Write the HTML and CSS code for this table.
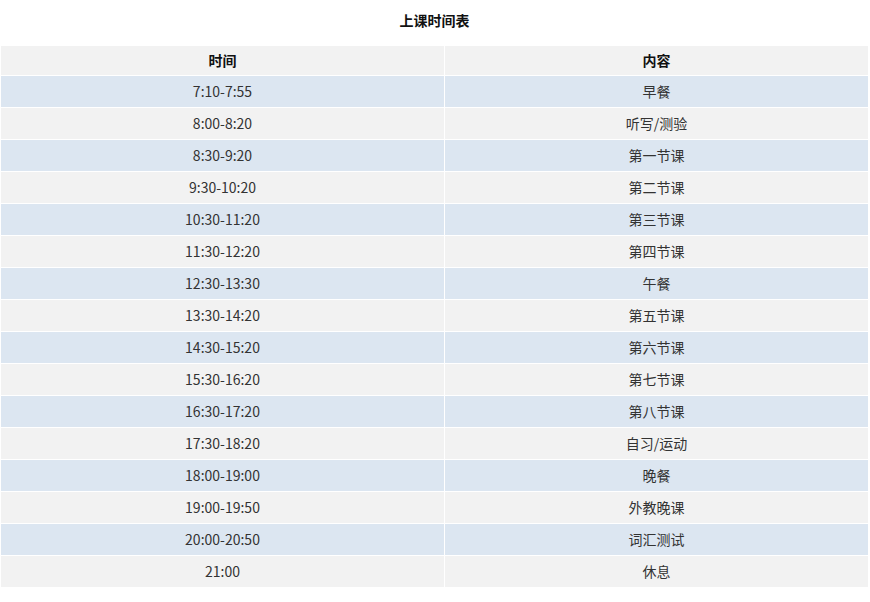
FILE: index.html
```html
<!DOCTYPE html>
<html lang="zh">
<head>
<meta charset="utf-8">
<link rel="stylesheet" href="styles.css">
</head>
<body>
<div class="page">
  <h1 class="title">上课时间表</h1>
  <div class="schedule">
    <div class="cell head">时间</div><div class="cell head">内容</div>
    <div class="cell blue">7:10-7:55</div><div class="cell blue">早餐</div>
    <div class="cell gray">8:00-8:20</div><div class="cell gray">听写/测验</div>
    <div class="cell blue">8:30-9:20</div><div class="cell blue">第一节课</div>
    <div class="cell gray">9:30-10:20</div><div class="cell gray">第二节课</div>
    <div class="cell blue">10:30-11:20</div><div class="cell blue">第三节课</div>
    <div class="cell gray">11:30-12:20</div><div class="cell gray">第四节课</div>
    <div class="cell blue">12:30-13:30</div><div class="cell blue">午餐</div>
    <div class="cell gray">13:30-14:20</div><div class="cell gray">第五节课</div>
    <div class="cell blue">14:30-15:20</div><div class="cell blue">第六节课</div>
    <div class="cell gray">15:30-16:20</div><div class="cell gray">第七节课</div>
    <div class="cell blue">16:30-17:20</div><div class="cell blue">第八节课</div>
    <div class="cell gray">17:30-18:20</div><div class="cell gray">自习/运动</div>
    <div class="cell blue">18:00-19:00</div><div class="cell blue">晚餐</div>
    <div class="cell gray">19:00-19:50</div><div class="cell gray">外教晚课</div>
    <div class="cell blue">20:00-20:50</div><div class="cell blue">词汇测试</div>
    <div class="cell gray">21:00</div><div class="cell gray">休息</div>
  </div>
</div>
</body>
</html>
```

FILE: styles.css
```css
html, body {
  margin: 0;
  padding: 0;
  background: #ffffff;
}
.page {
  padding: 0 2px 0 1px;
  font-family: "Noto Sans CJK SC", "Noto Sans", sans-serif;
  color: #333333;
}
.title {
  margin: 0;
  height: 46px;
  line-height: 40px;
  font-size: 14px;
  font-weight: bold;
  text-align: center;
  color: #111111;
}
.schedule {
  display: grid;
  grid-template-columns: 443px 423px;
  grid-auto-rows: 31px;
  grid-template-rows: 29px;
  gap: 1px;
  background: #ffffff;
}
.cell {
  display: flex;
  align-items: center;
  justify-content: center;
  padding-bottom: 2px;
  font-size: 14px;
}
.head {
  background: #f2f2f2;
  font-weight: bold;
  color: #111111;
}
.blue { background: #dce6f1; }
.gray { background: #f2f2f2; }
```
